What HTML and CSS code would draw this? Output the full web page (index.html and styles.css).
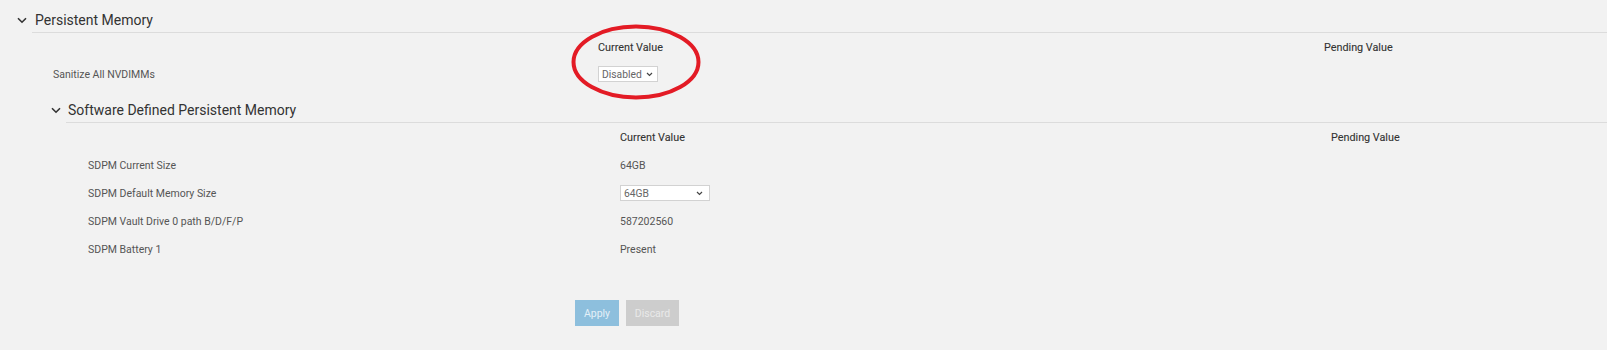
FILE: index.html
```html
<!DOCTYPE html>
<html>
<head>
    <meta charset="utf-8">
    <link rel="stylesheet" href="styles.css">
</head>
<body>
    <div class="panel">
        <div class="section-head">
            <svg class="chevron" width="10" height="7" viewBox="0 0 10 7"><path d="M1 1.2l4 4 4-4" fill="none" stroke="#333" stroke-width="1.6"/></svg>
            <div class="section-title">Persistent Memory</div>
        </div>

        <div class="attr-table top">
            <div class="col-head"></div>
            <div class="col-head">Current Value</div>
            <div class="col-head">Pending Value</div>

            <div class="attr-label">Sanitize All NVDIMMs</div>
            <div class="attr-value">
                <div class="select small">
                    <span>Disabled</span>
                    <svg width="7" height="5" viewBox="0 0 7 5"><path d="M1 1l2.5 2.5L6 1" fill="none" stroke="#444" stroke-width="1.2"/></svg>
                </div>
            </div>
            <div></div>
        </div>

        <div class="sub-section">
            <div class="section-head sub">
                <svg class="chevron" width="10" height="7" viewBox="0 0 10 7"><path d="M1 1.2l4 4 4-4" fill="none" stroke="#333" stroke-width="1.6"/></svg>
                <div class="section-title">Software Defined Persistent Memory</div>
            </div>

            <div class="attr-table nested">
                <div class="col-head"></div>
                <div class="col-head">Current Value</div>
                <div class="col-head">Pending Value</div>

                <div class="attr-label">SDPM Current Size</div>
                <div class="attr-value">64GB</div>
                <div></div>

                <div class="attr-label">SDPM Default Memory Size</div>
                <div class="attr-value">
                    <div class="select wide">
                        <span>64GB</span>
                        <svg width="7" height="5" viewBox="0 0 7 5"><path d="M1 1l2.5 2.5L6 1" fill="none" stroke="#444" stroke-width="1.2"/></svg>
                    </div>
                </div>
                <div></div>

                <div class="attr-label">SDPM Vault Drive 0 path B/D/F/P</div>
                <div class="attr-value">587202560</div>
                <div></div>

                <div class="attr-label">SDPM Battery 1</div>
                <div class="attr-value">Present</div>
                <div></div>
            </div>
        </div>

        <div class="actions">
            <button class="btn btn-apply">Apply</button>
            <button class="btn btn-discard">Discard</button>
        </div>
    </div>

    <!-- red annotation ring drawn over the screenshot -->
    <svg class="annotation" width="140" height="84" viewBox="0 0 140 84">
        <ellipse cx="70" cy="42" rx="62.5" ry="35.5" fill="none" stroke="#e31b25" stroke-width="4"/>
    </svg>
</body>
</html>
```

FILE: styles.css
```css
body {
    margin: 0;
    padding: 0;
    background: #ffffff;
    font-family: Roboto, "Liberation Sans", sans-serif;
    color: #555;
    position: relative;
}

.panel {
    background: #f2f2f2;
    height: 350px;
    box-sizing: border-box;
    padding-top: 8px;
}

.section-head {
    display: flex;
    align-items: center;
    padding-left: 17px;
}

.section-head .chevron {
    flex: none;
    margin-right: 5px;
}

.section-title {
    flex: 1;
    height: 24px;
    line-height: 24px;
    padding-left: 3px;
    font-size: 14px;
    color: #333;
    border-bottom: 1px solid #dcdcdc;
}

.attr-table {
    display: grid;
    align-items: center;
    font-size: 10.5px;
}

.attr-table.top {
    padding-left: 53px;
    grid-template-columns: 545px 726px 1fr;
    grid-template-rows: 28px 26px;
}

.attr-table.nested {
    padding-left: 88px;
    grid-template-columns: 532px 711px 1fr;
    grid-template-rows: 28px 28px 28px 28px 28px;
}

.col-head {
    color: #333;
    font-size: 10.8px;
    -webkit-text-stroke: 0.1px #333;
}

.attr-label,
.attr-value {
    color: #555;
}

.sub-section {
    margin-top: 11px;
}

.section-head.sub {
    padding-left: 51px;
}

.section-head.sub .section-title {
    padding-left: 2px;
}

.select {
    display: flex;
    align-items: center;
    justify-content: space-between;
    box-sizing: border-box;
    height: 16px;
    background: #fff;
    border: 1px solid #d2d2d2;
    padding: 0 4px 0 3px;
    color: #666;
    font-size: 10.3px;
}

.select.small { width: 60px; }
.select.wide { width: 90px; padding-right: 6px; }

.actions {
    display: flex;
    gap: 7px;
    margin-top: 37px;
    padding-left: 575px;
}

.btn {
    height: 26px;
    border: none;
    border-radius: 0;
    font-family: Roboto, "Liberation Sans", sans-serif;
    font-size: 10.5px;
    padding: 0;
    cursor: default;
}

.btn-apply {
    width: 44px;
    background: #8dbfdd;
    color: #e4f0f8;
}

.btn-discard {
    width: 53px;
    background: #cdcdcd;
    color: #e9e9e9;
}

.annotation {
    position: absolute;
    left: 566px;
    top: 20px;
}
```
